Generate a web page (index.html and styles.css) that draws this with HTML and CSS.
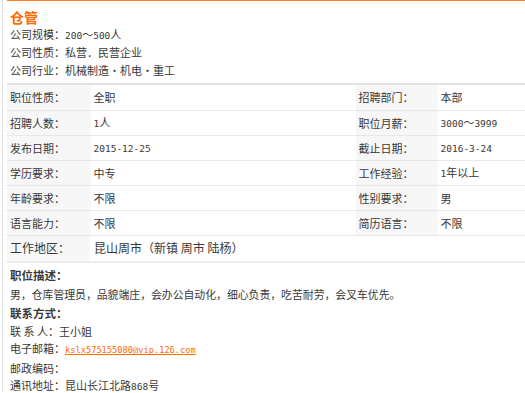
FILE: index.html
```html
<!DOCTYPE html>
<html lang="zh">
<head>
<meta charset="utf-8">
<link rel="stylesheet" href="styles.css">
</head>
<body>
<div class="wrap">
  <div class="box">
    <div class="head">
      <div class="title">仓管</div>
      <div class="info">公司规模：<span class="num">200</span>～<span class="num">500</span>人</div>
      <div class="info">公司性质：私营．民营企业</div>
      <div class="info">公司行业：机械制造・机电・重工</div>
    </div>
    <table class="grid">
      <tr class="r1">
        <td class="lab">职位性质：</td><td class="val">全职</td>
        <td class="lab">招聘部门：</td><td class="val">本部</td>
      </tr>
      <tr>
        <td class="lab">招聘人数：</td><td class="val"><span class="num">1</span>人</td>
        <td class="lab">职位月薪：</td><td class="val"><span class="num">3000</span>～<span class="num">3999</span></td>
      </tr>
      <tr>
        <td class="lab">发布日期：</td><td class="val"><span class="num">2015-12-25</span></td>
        <td class="lab">截止日期：</td><td class="val"><span class="num">2016-3-24</span></td>
      </tr>
      <tr>
        <td class="lab">学历要求：</td><td class="val">中专</td>
        <td class="lab">工作经验：</td><td class="val"><span class="num">1</span>年以上</td>
      </tr>
      <tr>
        <td class="lab">年龄要求：</td><td class="val">不限</td>
        <td class="lab">性别要求：</td><td class="val">男</td>
      </tr>
      <tr>
        <td class="lab">语言能力：</td><td class="val">不限</td>
        <td class="lab">简历语言：</td><td class="val">不限</td>
      </tr>
      <tr class="r7">
        <td class="lab big">工作地区：</td><td class="val big area" colspan="3">昆山周市（新镇 周市 陆杨）</td>
      </tr>
    </table>
    <div class="sec">
      <div class="h">职位描述：</div>
      <div class="line">男，仓库管理员，品貌端庄，会办公自动化，细心负责，吃苦耐劳，会叉车优先。</div>
      <div class="h">联系方式：</div>
      <div class="c">联 系 人：王小姐</div>
      <div class="c">电子邮箱：<a class="mail" href="#">kslx575155080@vip.126.com</a></div>
      <div class="c">邮政编码：</div>
      <div class="c">通讯地址：昆山长江北路<span class="num">868</span>号</div>
    </div>
  </div>
</div>
</body>
</html>
```

FILE: styles.css
```css
html, body {
  margin: 0;
  padding: 0;
  background: #fff;
}
body {
  font-family: "Noto Sans CJK SC", "DejaVu Sans", sans-serif;
  font-size: 11px;
  color: #383838;
}
.wrap {
  margin-left: 2px;
  border-left: 1px dotted #c8c8c8;
  padding-left: 4px;
  min-height: 393px;
  box-sizing: border-box;
}
.box {
  border-top: 1px solid #ff7a22;
}
.head {
  padding: 7px 0 0 3px;
}
.title {
  color: #ff6a00;
  font-size: 14px;
  font-weight: bold;
  line-height: 18px;
}
.info {
  line-height: 17.3px;
}
.num {
  font-family: "DejaVu Sans Mono", monospace;
  font-size: 9.5px;
}
.grid {
  margin-top: 4px;
  width: 100%;
  border-collapse: collapse;
  border-top: 2px solid #e2e2e2;
  border-bottom: 2px solid #ececec;
}
.grid td {
  height: 24px;
  padding: 0 0 0 3px;
  border-bottom: 1px solid #e8e8e8;
  line-height: 14px;
  white-space: nowrap;
}
.grid .r1 td {
  height: 25px;
}
.grid .r7 td {
  height: 25px;
}
.lab {
  background: #f7f7f7;
  width: 80px;
}
.val {
  background: #fff;
}
.grid td:nth-child(2) {
  width: 262px;
}
.grid td:nth-child(3) {
  width: 79px;
}
.big {
  font-size: 12px;
}
.area {
  border-left: 1px solid #fff;
}
.sec {
  padding: 3px 0 0 3px;
}
.h {
  font-weight: bold;
  font-size: 11.5px;
  line-height: 19px;
}
.line {
  line-height: 19px;
  font-size: 10.85px;
}
.c {
  line-height: 17.5px;
}
.c:first-of-type {
  margin-top: 1px;
}
.mail {
  color: #ff6a00;
  text-decoration: underline;
  font-family: "DejaVu Sans Mono", monospace;
  font-size: 8.7px;
}
```
